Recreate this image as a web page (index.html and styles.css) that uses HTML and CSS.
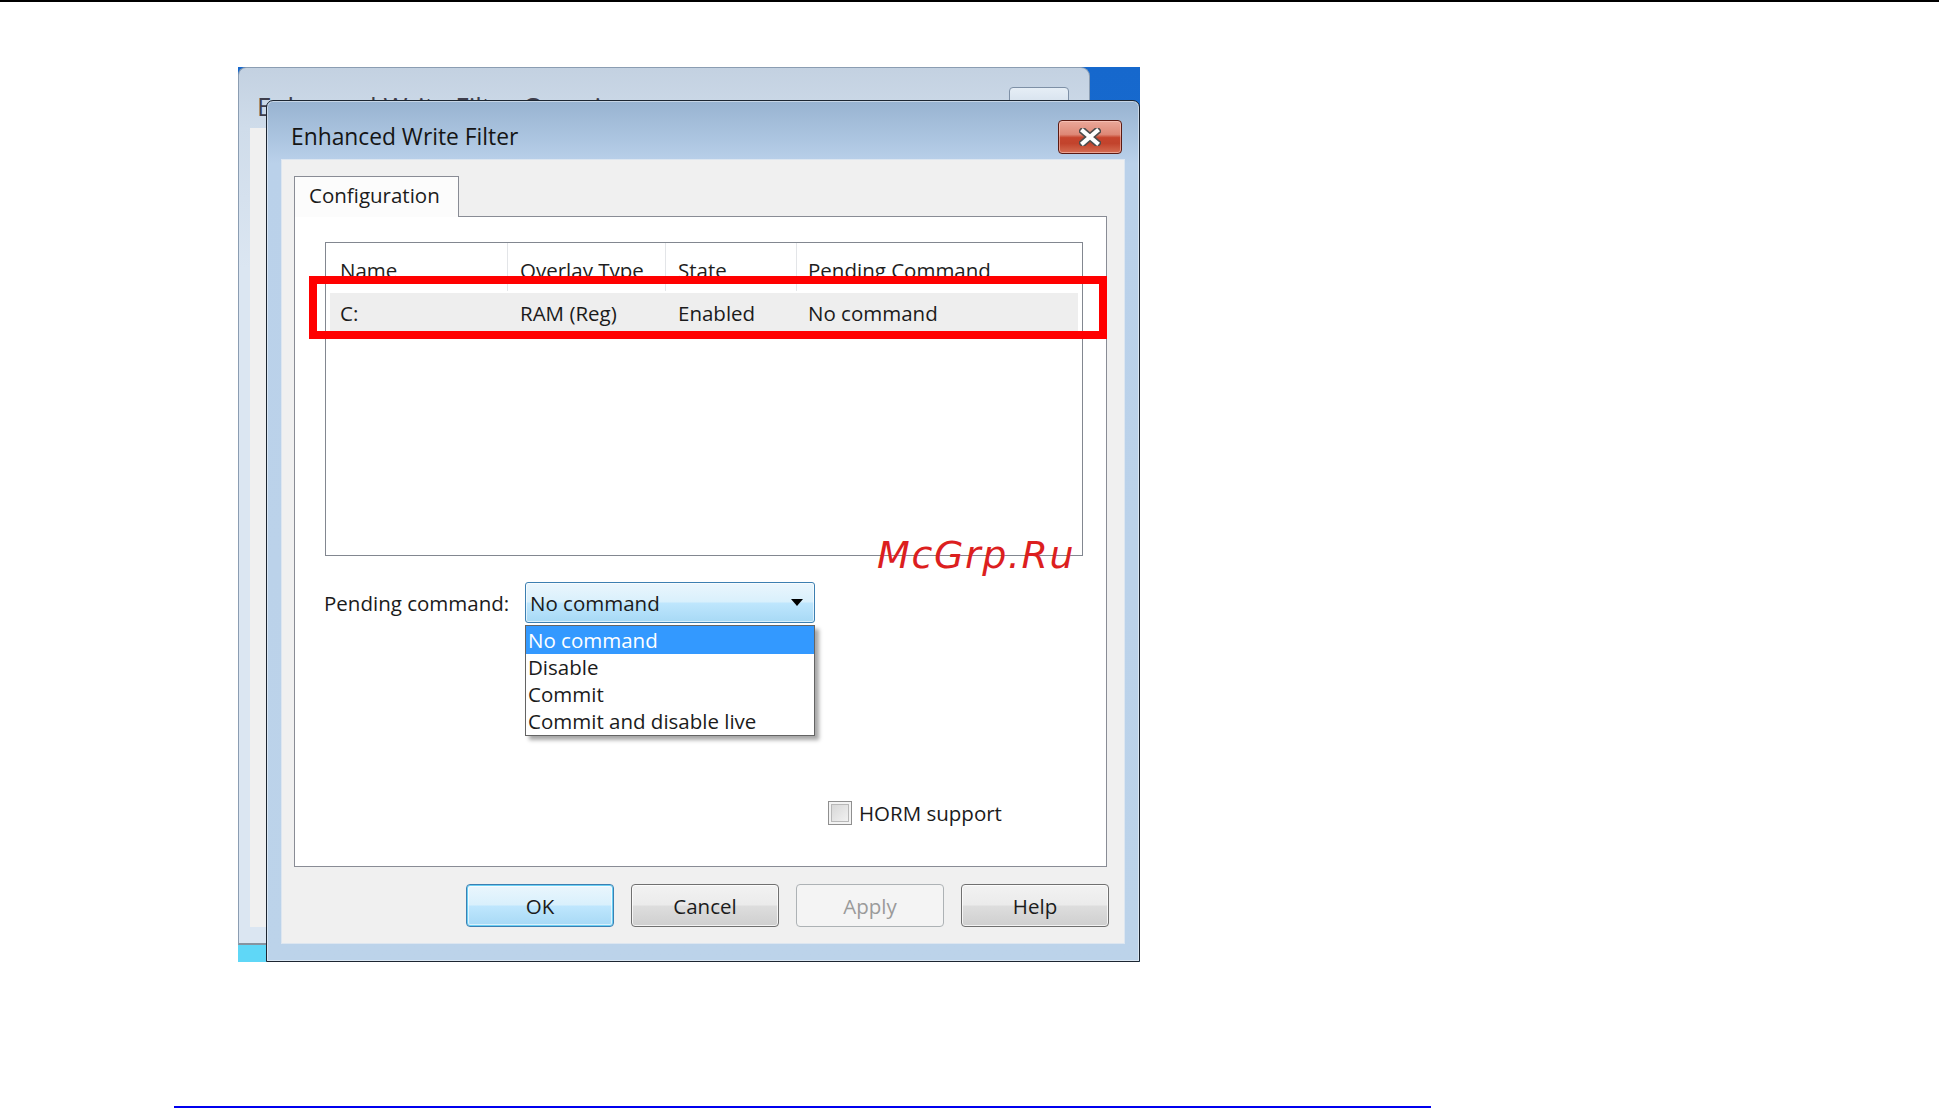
FILE: index.html
```html
<!DOCTYPE html>
<html lang="en">
<head>
<meta charset="utf-8">
<title>Enhanced Write Filter</title>
<link rel="stylesheet" href="styles.css">
</head>
<body>
<div class="topline"></div>
<main class="page">
  <div class="shot">
    <div class="back-win">
      <div class="back-title-row">
        <span class="back-title">Enhanced Write Filter Overview</span>
        <span class="back-btn"></span>
      </div>
      <div class="back-client"></div>
    </div>
    <div class="taskbar"></div>

    <section class="dialog">
      <header class="titlebar">
        <span class="title">Enhanced Write Filter</span>
        <button class="close-btn" type="button" aria-label="Close">
          <svg width="22" height="18" viewBox="0 0 22 18">
            <path d="M4 3 L18 15 M18 3 L4 15" stroke="#4d4d4d" stroke-width="7.5" stroke-linecap="square" fill="none"/>
            <path d="M4 3 L18 15 M18 3 L4 15" stroke="#ffffff" stroke-width="4.2" stroke-linecap="square" fill="none"/>
          </svg>
        </button>
      </header>

      <div class="client">
        <div class="tabs">
          <div class="tab">Configuration</div>
        </div>
        <div class="panel">
          <div class="listview">
            <div class="lv-header">
              <span class="lv-col c1">Name</span>
              <span class="lv-col c2">Overlay Type</span>
              <span class="lv-col c3">State</span>
              <span class="lv-col c4">Pending Command</span>
            </div>
            <div class="lv-row">
              <span class="lv-cell c1">C:</span>
              <span class="lv-cell c2">RAM (Reg)</span>
              <span class="lv-cell c3">Enabled</span>
              <span class="lv-cell c4">No command</span>
            </div>
          </div>

          <div class="pending-row">
            <span class="label">Pending command:</span>
            <div class="combo">
              <span>No command</span>
              <svg class="arrow" width="12" height="7" viewBox="0 0 12 7"><polygon points="0,0 12,0 6,7" fill="#000"/></svg>
            </div>
          </div>

          <ul class="dropdown">
            <li class="sel">No command</li>
            <li>Disable</li>
            <li>Commit</li>
            <li>Commit and disable live</li>
          </ul>

          <label class="horm">
            <span class="checkbox"></span>
            <span>HORM support</span>
          </label>

          <div class="highlight"></div>
        </div>

        <div class="buttons">
          <button class="btn btn-default" type="button">OK</button>
          <button class="btn" type="button">Cancel</button>
          <button class="btn btn-disabled" type="button">Apply</button>
          <button class="btn" type="button">Help</button>
        </div>
      </div>
    </section>

    <div class="watermark">McGrp.Ru</div>
  </div>
  <div class="link-line"></div>
</main>
</body>
</html>
```

FILE: styles.css
```css
html, body {
  margin: 0;
  padding: 0;
  background: #ffffff;
  overflow: hidden;
}

body {
  width: 1939px;
  height: 1108px;
  font-family: "Open Sans", "Noto Sans", sans-serif;
  font-size: 20.5px;
  color: #1b1b1b;
}

.topline {
  height: 2px;
  background: #000;
}

.page {
  display: flex;
  flex-direction: column;
}

.shot {
  position: relative;
  width: 902px;
  height: 895px;
  margin-top: 65px;
  margin-left: 238px;
  background: linear-gradient(#1668cd, #1f78d6);
}

/* ---------- background window ---------- */
.back-win {
  position: absolute;
  left: 0;
  top: 0;
  width: 852px;
  height: 878px;
  box-sizing: border-box;
  border: 1px solid #8b9db2;
  border-bottom: 2px solid #87939f;
  border-radius: 8px 9px 0 0;
  background: linear-gradient(#c3d1e1 0, #cfdcea 60px, #dbe6f2 200px, #dbe6f2 100%);
  display: flex;
  flex-direction: column;
  padding: 0 12px 16px 11px;
}

.back-title-row {
  height: 60px;
  display: flex;
  justify-content: space-between;
  align-items: flex-start;
  padding-top: 19px;
  padding-left: 7px;
  box-sizing: border-box;
}

.back-title {
  font-size: 26px;
  line-height: 26px;
  margin-top: 6px;
  color: #3e3e4c;
  white-space: nowrap;
}

.back-btn {
  width: 60px;
  height: 30px;
  margin-right: 8px;
  border: 1px solid #7e90a6;
  border-radius: 4px;
  background: linear-gradient(#e6eef6, #c9d7e6);
  box-sizing: border-box;
}

.back-client {
  flex: 1;
  background: #f0f0f0;
}

.taskbar {
  position: absolute;
  left: 0;
  bottom: 0;
  width: 100%;
  height: 17px;
  background: #5fd7f7;
}

/* ---------- dialog ---------- */
.dialog {
  position: absolute;
  left: 28px;
  top: 33px;
  width: 874px;
  height: 862px;
  box-sizing: border-box;
  border: 1px solid #1c2531;
  border-radius: 7px 7px 0 0;
  background: linear-gradient(#98b3d1 0, #adc6e1 40px, #bad1ea 62px, #bcd3ea 100%);
  box-shadow: inset 0 0 0 1px rgba(255, 255, 255, 0.45);
  padding: 0 15px 18px 15px;
  display: flex;
  flex-direction: column;
}

.titlebar {
  height: 59px;
  flex: none;
  display: flex;
  justify-content: space-between;
  align-items: flex-start;
  padding: 19px 2px 0 9px;
  box-sizing: border-box;
}

.title {
  font-size: 22.8px;
  line-height: 30px;
  margin-top: 2px;
  color: #151515;
  white-space: nowrap;
}

.close-btn {
  width: 64px;
  height: 34px;
  padding: 0;
  border: 1px solid #5b1a12;
  border-radius: 4px;
  background: linear-gradient(#eaa89a 0%, #de8876 42%, #c6452e 52%, #c2432c 70%, #d56d52 100%);
  box-shadow: inset 0 0 0 1px rgba(255, 210, 200, 0.55);
  display: flex;
  align-items: center;
  justify-content: center;
}

.client {
  flex: 1;
  background: #f0f0f0;
  display: flex;
  flex-direction: column;
  padding: 16px 15px 0 12px;
  box-shadow: 0 0 0 1px #dde6f0;
}

.tabs {
  display: flex;
  height: 40px;
}

.tab {
  position: relative;
  z-index: 2;
  width: 165px;
  height: 41px;
  box-sizing: border-box;
  border: 1px solid #898c95;
  border-bottom: none;
  background: #fcfcfc;
  padding-left: 14px;
  line-height: 37px;
  white-space: nowrap;
}

.panel {
  position: relative;
  width: 813px;
  height: 651px;
  box-sizing: border-box;
  border: 1px solid #898c95;
  background: #ffffff;
  padding: 25px 0 0 30px;
}

/* list view */
.listview {
  width: 758px;
  height: 314px;
  box-sizing: border-box;
  border: 1px solid #828790;
  background: #ffffff;
}

.lv-header {
  display: grid;
  grid-template-columns: 182px 158px 131px 1fr;
  height: 48px;
}

.lv-col {
  border-right: 1px solid #e3e5e8;
  padding: 10px 0 0 12px;
  line-height: 34px;
  white-space: nowrap;
  color: #1e1e1e;
}

.lv-col.c1 { padding-left: 14px; }
.lv-col.c4 { border-right: none; padding-left: 11px; }

.lv-row {
  display: grid;
  grid-template-columns: 178px 158px 131px 1fr;
  height: 39px;
  margin: 2px 4px 0 4px;
  background: #eeeeee;
  line-height: 40px;
}

.lv-cell {
  padding-left: 12px;
  white-space: nowrap;
}

.lv-cell.c1 { padding-left: 10px; }
.lv-cell.c4 { padding-left: 11px; }

/* pending command */
.pending-row {
  display: flex;
  align-items: center;
  margin-top: 26px;
  height: 41px;
}

.label {
  width: 200px;
  margin-left: -1px;
  white-space: nowrap;
}

.combo {
  width: 290px;
  height: 41px;
  margin-left: 1px;
  box-sizing: border-box;
  border: 1px solid #3c7fb1;
  border-radius: 3px;
  background: linear-gradient(#eaf6fd 0%, #d9f0fc 48%, #bee6fd 52%, #a7d9f5 100%);
  box-shadow: inset 0 0 0 1px rgba(255, 255, 255, 0.6);
  display: flex;
  align-items: center;
  justify-content: space-between;
  padding: 0 11px 0 4px;
  white-space: nowrap;
}

.arrow {
  flex: none;
}

.dropdown {
  position: absolute;
  left: 230px;
  top: 408px;
  width: 290px;
  margin: 0;
  padding: 0;
  list-style: none;
  box-sizing: border-box;
  border: 1px solid #646464;
  background: #ffffff;
  box-shadow: 4px 4px 4px rgba(0, 0, 0, 0.35);
  z-index: 3;
}

.dropdown li {
  height: 27px;
  line-height: 27px;
  padding-left: 2px;
  white-space: nowrap;
}

.dropdown li.sel {
  height: 28px;
  line-height: 29px;
  background: #3399ff;
  color: #ffffff;
}

/* checkbox */
.horm {
  display: flex;
  align-items: center;
  gap: 7px;
  margin-top: 178px;
  margin-left: 503px;
  height: 24px;
  white-space: nowrap;
}

.checkbox {
  width: 24px;
  height: 24px;
  box-sizing: border-box;
  border: 1px solid #8f8f8f;
  background: linear-gradient(135deg, #d3d3d3, #f6f6f6);
  box-shadow: inset 0 0 0 2px #f3f3f3, inset 0 0 0 3px #b8b8b8;
}

/* red annotation */
.highlight {
  position: absolute;
  left: 14px;
  top: 59px;
  width: 798px;
  height: 63px;
  box-sizing: border-box;
  border: 8px solid #ff0000;
  z-index: 4;
}

/* buttons */
.buttons {
  display: flex;
  justify-content: flex-end;
  gap: 17px;
  margin-top: 17px;
}

.btn {
  width: 148px;
  height: 43px;
  box-sizing: border-box;
  border: 1px solid #707070;
  border-radius: 4px;
  background: linear-gradient(#f2f2f2 0%, #ebebeb 48%, #dddddd 52%, #cfcfcf 100%);
  box-shadow: inset 0 0 0 1px rgba(255, 255, 255, 0.75);
  font-family: "Open Sans", "Noto Sans", sans-serif;
  font-size: 20.5px;
  color: #1b1b1b;
  padding: 0;
}

.btn-default {
  border-color: #3c7fb1;
  background: linear-gradient(#eaf6fd 0%, #d9f0fc 48%, #bee6fd 52%, #a7d9f5 100%);
  box-shadow: inset 0 0 0 1px #6ad0f5, inset 0 0 0 2px rgba(255, 255, 255, 0.6);
}

.btn-disabled {
  border-color: #adb2b5;
  background: #f4f4f4;
  color: #9a9a9a;
  box-shadow: none;
}

/* watermark */
.watermark {
  position: absolute;
  left: 639px;
  top: 469px;
  font-family: "DejaVu Sans", sans-serif;
  font-style: italic;
  font-size: 38px;
  line-height: 38px;
  letter-spacing: 1.6px;
  color: #dc1f1f;
  z-index: 10;
  white-space: nowrap;
}

.link-line {
  width: 1257px;
  height: 2px;
  margin-top: 144px;
  margin-left: 174px;
  background: #0000ee;
}
```
